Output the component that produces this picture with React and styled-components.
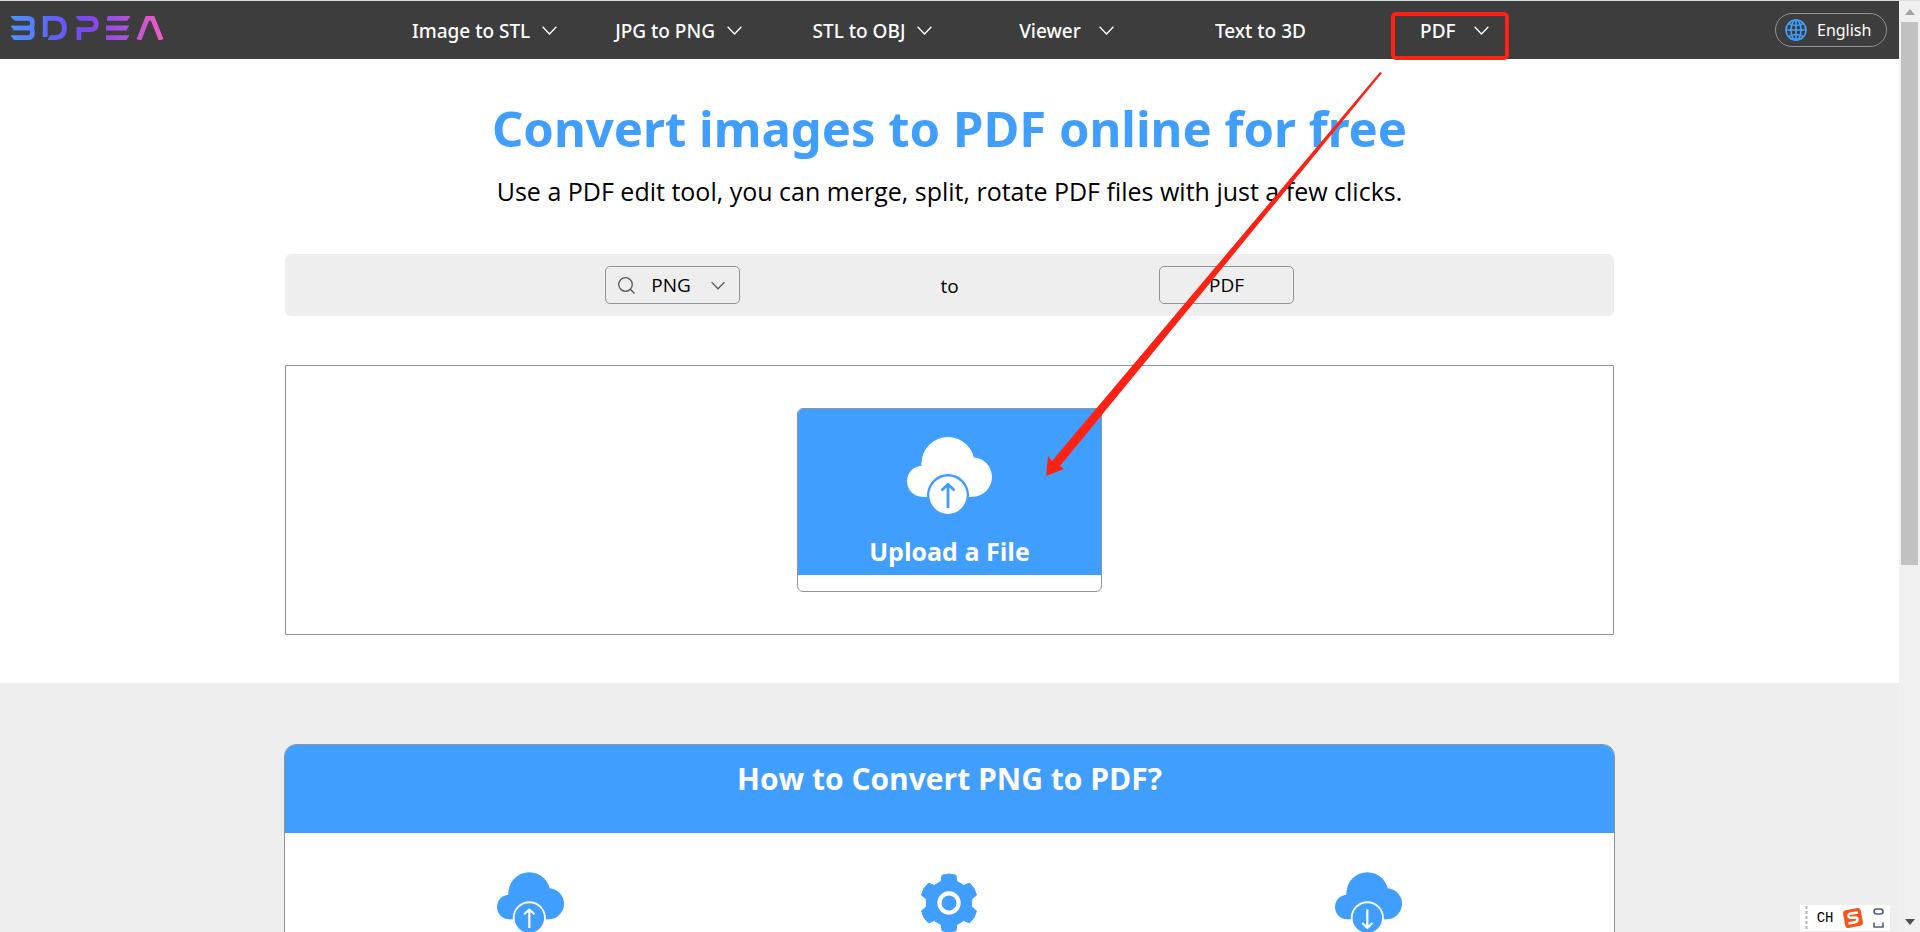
import React from "react";
import styled, { createGlobalStyle } from "styled-components";

const BLUE = "#409eff";
const LINE = "#909399";
const RED = "#ff2114";

const GlobalStyle = createGlobalStyle`
  * { box-sizing: border-box; }
  body {
    margin: 0;
    background: #fff;
    color: #000;
    font-family: "Open Sans", "Noto Sans", sans-serif;
    font-size: 19px;
  }
  button, select { font-family: inherit; color: inherit; margin: 0; }
  h1, h2, p { margin: 0; }
  svg { display: block; flex: none; }
`;

const Screen = styled.div`
  position: relative;
  height: 100vh;
  display: flex;
  border-top: 1px solid #d8dfdc;
  overflow: hidden;
`;

const Page = styled.div`
  position: relative;
  flex: 1;
  min-width: 0;
  overflow: hidden;
`;

/* header */

const Header = styled.header`
  display: flex;
  align-items: center;
  justify-content: space-between;
  height: 58px;
  padding: 0 12px 0 10px;
  background: #3d3d3d;
  color: #fff;
  font-family: "Noto Sans", sans-serif;
`;

const LogoLink = styled.a`
  padding-bottom: 4px;
`;

const Nav = styled.nav`
  width: 62%;
  display: grid;
  grid-template-columns: repeat(6, 1fr);
  align-self: stretch;
`;

const NavCell = styled.div`
  position: relative;
  display: flex;
  align-items: center;
  justify-content: center;
  padding-top: 2px;
`;

const NavButton = styled.button`
  display: flex;
  align-items: center;
  gap: ${(p) => (p.$wide ? 18 : 12)}px;
  padding: 0;
  border: 0;
  background: none;
  font-size: 19px;
  font-weight: 500;
  line-height: 28px;
  white-space: nowrap;

  svg { margin-bottom: 2px; }
`;

const Highlight = styled.span`
  position: absolute;
  left: 34px;
  top: 11px;
  width: 118px;
  height: 48px;
  border: 4px solid ${RED};
  border-radius: 5px;
  pointer-events: none;
  z-index: 2;
`;

const LanguageButton = styled.button`
  display: flex;
  align-items: center;
  gap: 10px;
  width: 112px;
  height: 34px;
  padding: 0 9px;
  border: 1px solid ${LINE};
  border-radius: 17px;
  background: none;
  font-size: 16px;
`;

/* hero */

const Hero = styled.main`
  display: flex;
  flex-direction: column;
  align-items: center;
  padding: 36px 0 48px;
`;

const Title = styled.h1`
  color: ${BLUE};
  font-family: "Noto Sans", sans-serif;
  font-size: 49px;
  line-height: 66px;
  font-weight: 700;
`;

const Subtitle = styled.p`
  margin-top: 12px;
  font-size: 25px;
  line-height: 36px;
`;

const FormatBar = styled.section`
  width: 70%;
  margin-top: 45px;
  height: 62px;
  display: flex;
  justify-content: center;
  border-radius: 6px;
  background: #eee;
`;

const FormatGrid = styled.div`
  width: 831px;
  max-width: 100%;
  display: grid;
  grid-template-columns: repeat(3, 1fr);
  align-items: center;
  justify-items: center;
`;

const FormatSelect = styled.label`
  display: flex;
  align-items: center;
  width: 135px;
  height: 38px;
  padding: 0 14px 0 12px;
  border: 1px solid ${LINE};
  border-radius: 5px;
`;

const Select = styled.select`
  flex: 1;
  min-width: 0;
  appearance: none;
  border: 0;
  padding: 0 4px 0 0;
  background: none;
  font-size: 19px;
  line-height: 26px;
  text-align: center;
  text-align-last: center;
`;

const FormatButton = styled.button`
  width: 135px;
  height: 38px;
  padding: 0;
  border: 1px solid ${LINE};
  border-radius: 5px;
  background: none;
  font-size: 19px;
  line-height: 26px;
`;

const ToLabel = styled.span`
  padding-top: 2px;
  line-height: 26px;
`;

const UploadArea = styled.section`
  width: 70%;
  margin-top: 49px;
  padding: 42px 0;
  display: flex;
  justify-content: center;
  border: 1px solid ${LINE};
`;

const UploadButton = styled.button`
  width: 305px;
  padding: 0 0 16px;
  border: 1px solid ${LINE};
  border-radius: 6px;
  background: #fff;
  overflow: hidden;
`;

const UploadFace = styled.span`
  display: flex;
  flex-direction: column;
  align-items: center;
  gap: 21px;
  padding: 28px 0 8px;
  background: ${BLUE};
  color: #fff;
  font-size: 25px;
  line-height: 32px;
  font-weight: 700;
`;

/* how-to */

const HowTo = styled.section`
  display: flex;
  justify-content: center;
  padding: 61px 0;
  background: #eee;
`;

const Card = styled.div`
  width: calc(70% + 2px);
  border: 1px solid ${LINE};
  border-radius: 12px;
  overflow: hidden;
  background: #fff;
`;

const CardTitle = styled.h2`
  height: 88px;
  padding-top: 12px;
  background: ${BLUE};
  color: #fff;
  text-align: center;
  font-size: 30px;
  line-height: 44px;
  font-weight: 700;
`;

const Steps = styled.div`
  display: grid;
  grid-template-columns: repeat(3, 1fr);
  justify-items: center;
  padding: 39px 36px 60px;
`;

/* window chrome */

const ScrollTrack = styled.div`
  width: 21px;
  display: flex;
  flex-direction: column;
  align-items: center;
  background: #f0f0f0;
`;

const ScrollStep = styled.div`
  height: 21px;
  display: flex;
  align-items: center;
`;

const ScrollThumb = styled.div`
  width: 17px;
  height: 543px;
  margin-bottom: auto;
  background: #c1c1c1;
`;

const ArrowDrawing = styled.svg`
  position: absolute;
  left: calc(50% + 96px);
  top: 71px;
  pointer-events: none;
  z-index: 3;
`;

const InputBar = styled.div`
  position: absolute;
  right: 30px;
  bottom: 1px;
  width: 90px;
  height: 26px;
  padding: 0 5px;
  display: flex;
  align-items: center;
  justify-content: space-between;
  background: #fff;
  font: 14px "Liberation Mono", monospace;
  z-index: 4;
`;

const Chevron = ({ color = "#fff", width = 15 }) => (
  <svg width={width} height="9" viewBox="0 0 15 9" fill="none" stroke={color} strokeWidth="1.3">
    <path d="M0.6 0.8 L7.5 8 L14.4 0.8" />
  </svg>
);

const Logo = () => (
  <svg width="154" height="24" viewBox="-1 0 154 24" fill="none" role="img" aria-label="3DPEA">
    <defs>
      <linearGradient id="brand" gradientUnits="userSpaceOnUse" x1="0" y1="0" x2="152" y2="0">
        <stop offset="0" stopColor="#4b97ff" />
        <stop offset="0.28" stopColor="#5f62f8" />
        <stop offset="0.5" stopColor="#7c46f2" />
        <stop offset="0.75" stopColor="#ad50dc" />
        <stop offset="1" stopColor="#f25cc4" />
      </linearGradient>
    </defs>
    <g stroke="url(#brand)" strokeWidth="4.8">
      <path d="M0 2.4 H17 Q21.4 2.4 21.4 6.4 V8 Q21.4 11.8 18 11.8 Q21.4 11.8 21.4 15.6 V17.4 Q21.4 21.6 17 21.6 H0" />
      <path d="M0 12 H18" />
      <path d="M34.2 21 V2.4 H44 Q53.4 2.4 53.4 12 Q53.4 21.6 44 21.6 H37" />
      <path d="M65 2.4 H79 Q85.2 2.4 85.2 8 Q85.2 13.6 79 13.6 H68 V24" />
      <path d="M96 2.4 H119 M95 12 H118 M95 21.6 H118" />
      <path d="M127.8 24 L136.4 2.4 H141.6 L150.2 24" />
    </g>
    <g fill="#3d3d3d">
      <path d="M-1 0 L4 5 H-1 Z M-1 9 L3 14.5 H-1 Z M-1 19 L3.5 24.5 H-1 Z" />
      <path d="M32 24.5 L42 16 L36 24.5 Z" />
      <path d="M64 0 L68.5 5 H64 Z" />
      <path d="M120 0 L116 5 H120 Z M119 9 L115 14.5 H119 Z M119 19 L115 24.5 H119 Z M94 0 H97 L94 5 Z" />
    </g>
  </svg>
);

const Globe = () => (
  <svg width="22" height="22" viewBox="0 0 22 22" fill="none" stroke={BLUE} strokeWidth="1.6">
    <circle cx="11" cy="11" r="10" />
    <ellipse cx="11" cy="11" rx="5" ry="10" />
    <path d="M11 1 V21 M1 11 H21 M3.6 4.6 Q11 8.4 18.4 4.6 M3.6 17.4 Q11 13.6 18.4 17.4" />
  </svg>
);

const SearchIcon = () => (
  <svg width="17" height="17" viewBox="0 0 17 17" fill="none" stroke="#555" strokeWidth="1.3">
    <circle cx="7.5" cy="7.5" r="6.8" />
    <path d="M12.3 12.3 L16.5 16.5" />
  </svg>
);

const Cloud = ({ width, color, back, down }) => (
  <svg width={width} height={Math.round((width * 77) / 85)} viewBox="0 0 85 77">
    <g fill={color}>
      <circle cx="41" cy="26.5" r="26.5" />
      <circle cx="15.5" cy="44.2" r="15.5" />
      <circle cx="65.3" cy="40" r="19.7" />
      <path d="M14.6 26 L15.5 59.7 H65.3 V26 Z" />
    </g>
    <circle cx="41" cy="58" r="21" fill={back} />
    <circle cx="41" cy="58.2" r="18.7" fill={color} />
    <path
      d="M41 71 V47.5 M34.5 53.5 L41 47.3 L47.5 53.5"
      transform={down ? "rotate(180 41 59)" : undefined}
      fill="none"
      stroke={back}
      strokeWidth="2.8"
      strokeLinejoin="round"
    />
  </svg>
);

const polar = (radius, degrees) => {
  const a = ((degrees - 90) * Math.PI) / 180;
  return `${(radius * Math.cos(a)).toFixed(2)},${(radius * Math.sin(a)).toFixed(2)}`;
};

const gearOutline = [0, 60, 120, 180, 240, 300]
  .flatMap((t) => [polar(23, t - 20), polar(28.6, t - 14), polar(29, t), polar(28.6, t + 14), polar(23, t + 20)])
  .join(" ");

const Gear = () => (
  <svg width="58" height="62" viewBox="-29 -31 58 62">
    <polygon points={gearOutline} fill={BLUE} stroke={BLUE} strokeWidth="1" strokeLinejoin="round" />
    <circle r="9.6" fill="none" stroke="#fff" strokeWidth="4.2" />
  </svg>
);

const navItems = [
  { label: "Image to STL", menu: true },
  { label: "JPG to PNG", menu: true },
  { label: "STL to OBJ", menu: true },
  { label: "Viewer", menu: true, wide: true },
  { label: "Text to 3D" },
  { label: "PDF", menu: true, wide: true, marked: true },
];

export default function App() {
  return (
    <Screen>
      <GlobalStyle />
      <Page>
        <Header>
          <LogoLink href="#">
            <Logo />
          </LogoLink>
          <Nav>
            {navItems.map((item) => (
              <NavCell key={item.label}>
                <NavButton $wide={item.wide}>
                  {item.label}
                  {item.menu && <Chevron />}
                </NavButton>
                {item.marked && <Highlight />}
              </NavCell>
            ))}
          </Nav>
          <LanguageButton>
            <Globe />
            English
          </LanguageButton>
        </Header>

        <Hero>
          <Title>Convert images to PDF online for free</Title>
          <Subtitle>Use a PDF edit tool, you can merge, split, rotate PDF files with just a few clicks.</Subtitle>
          <FormatBar>
            <FormatGrid>
              <FormatSelect>
                <SearchIcon />
                <Select aria-label="Source format" defaultValue="PNG">
                  <option>PNG</option>
                </Select>
                <Chevron color="#555" width={14} />
              </FormatSelect>
              <ToLabel>to</ToLabel>
              <FormatButton>PDF</FormatButton>
            </FormatGrid>
          </FormatBar>
          <UploadArea>
            <UploadButton>
              <UploadFace>
                <Cloud width={85} color="#fff" back={BLUE} />
                Upload a File
              </UploadFace>
            </UploadButton>
          </UploadArea>
        </Hero>

        <HowTo>
          <Card>
            <CardTitle>How to Convert PNG to PDF?</CardTitle>
            <Steps>
              <Cloud width={67} color={BLUE} back="#fff" />
              <Gear />
              <Cloud width={67} color={BLUE} back="#fff" down />
            </Steps>
          </Card>
        </HowTo>

        <ArrowDrawing width="336" height="404" viewBox="0 0 336 404" fill={RED}>
          <polygon points="334,0 336,1 14,394 18,397 0,404 2,384 6,389" />
        </ArrowDrawing>
      </Page>

      <ScrollTrack>
        <ScrollStep>
          <svg width="10" height="6" viewBox="0 0 10 6" fill="#a3a3a3"><path d="M0 6 L5 0 L10 6 Z" /></svg>
        </ScrollStep>
        <ScrollThumb />
        <ScrollStep>
          <svg width="10" height="6" viewBox="0 0 10 6" fill="#505050"><path d="M0 0 L5 6 L10 0 Z" /></svg>
        </ScrollStep>
      </ScrollTrack>

      <InputBar>
        <svg width="3" height="26" viewBox="0 0 3 26" stroke="#b5b5b5" strokeWidth="2" strokeDasharray="3 2">
          <path d="M1.5 1 V26" />
        </svg>
        CH
        <svg width="22" height="22" viewBox="0 0 22 22">
          <rect x="2" y="2" width="18" height="18" rx="3" fill="#f9541c" transform="rotate(-10 11 11)" />
          <path d="M16 5.5 L9 6.5 Q6 7 6.4 9 Q6.8 11 9 10.8 L13 10.5 Q15.6 10.5 15.6 12.6 Q15.6 14.8 13 15.3 L6.5 16.5" fill="none" stroke="#fff" strokeWidth="2.4" />
        </svg>
        <svg width="12" height="22" viewBox="0 0 12 22" fill="none" stroke="#555e78" strokeWidth="1.6">
          <rect x="1" y="2" width="9" height="5" rx="2.5" />
          <path d="M1 15.5 V20 H10 V15.5" />
        </svg>
      </InputBar>
    </Screen>
  );
}
